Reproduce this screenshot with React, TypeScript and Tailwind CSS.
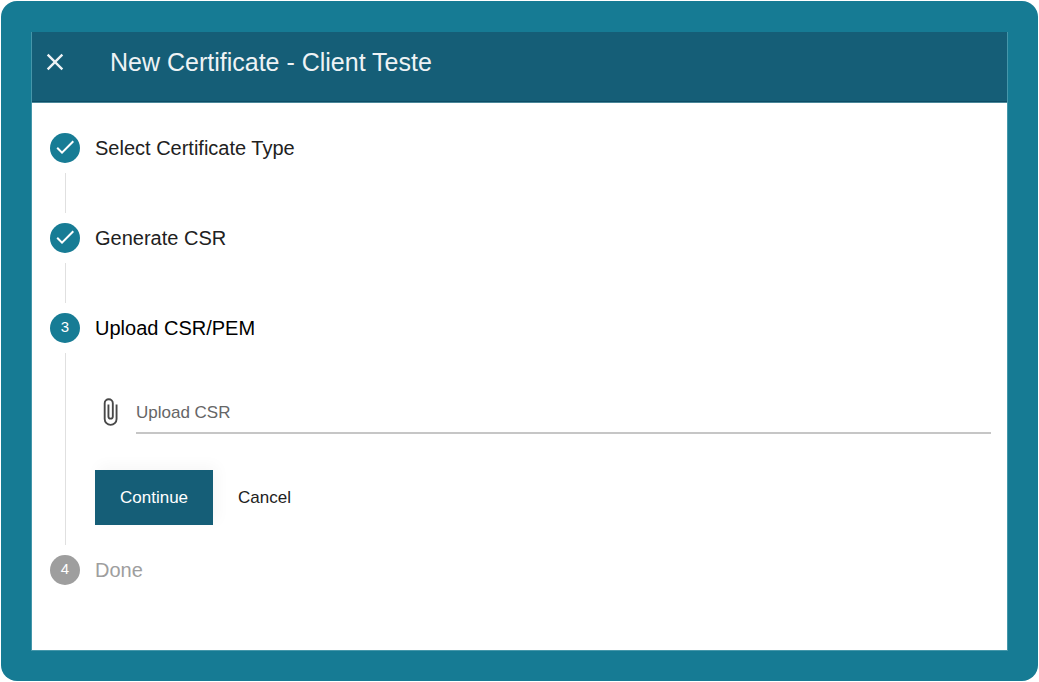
import React from "react";

type StepState = "complete" | "active" | "pending";

interface StepProps {
  number: number;
  title: string;
  state: StepState;
  last?: boolean;
  children?: React.ReactNode;
}

const badgeStyles: Record<StepState, string> = {
  complete: "bg-[#177c95]",
  active: "bg-[#177c95]",
  pending: "bg-[#9e9e9e]",
};

const titleStyles: Record<StepState, string> = {
  complete: "text-[#212121]",
  active: "text-black",
  pending: "text-[#9e9e9e]",
};

function CheckIcon() {
  return (
    <svg viewBox="0 0 24 24" className="size-6" fill="currentColor" aria-hidden="true">
      <path d="M21,7L9,19L3.5,13.5L4.91,12.09L9,16.17L19.59,5.59L21,7Z" />
    </svg>
  );
}

function CloseIcon() {
  return (
    <svg viewBox="0 0 24 24" className="size-7" fill="currentColor" aria-hidden="true">
      <path d="M19,6.41L17.59,5L12,10.59L6.41,5L5,6.41L10.59,12L5,17.59L6.41,19L12,13.41L17.59,19L19,17.59L13.41,12L19,6.41Z" />
    </svg>
  );
}

function PaperclipIcon() {
  return (
    <svg viewBox="0 0 24 24" className="size-[30px]" fill="currentColor" aria-hidden="true">
      <path d="M16.5,6V17.5A4,4 0 0,1 12.5,21.5A4,4 0 0,1 8.5,17.5V5A2.5,2.5 0 0,1 11,2.5A2.5,2.5 0 0,1 13.5,5V15.5A1,1 0 0,1 12.5,16.5A1,1 0 0,1 11.5,15.5V6H10V15.5A2.5,2.5 0 0,0 12.5,18A2.5,2.5 0 0,0 15,15.5V5A4,4 0 0,0 11,1A4,4 0 0,0 7,5V17.5A5.5,5.5 0 0,0 12.5,23A5.5,5.5 0 0,0 18,17.5V6H16.5Z" />
    </svg>
  );
}

function Step({ number, title, state, last = false, children }: StepProps) {
  return (
    <li className="flex gap-[15px]" aria-current={state === "active" ? "step" : undefined}>
      <div className="flex w-[30px] shrink-0 flex-col items-center">
        <span
          className={`flex size-[30px] shrink-0 items-center justify-center rounded-full pb-0.5 text-[15px] leading-5 text-white ${badgeStyles[state]}`}
        >
          {state === "complete" ? <CheckIcon /> : number}
        </span>
        {!last && <span className="my-2.5 min-h-10 w-px grow bg-[#e0e0e0]" />}
      </div>
      <div className="min-w-0 grow">
        <h2 className={`text-xl leading-[30px] ${titleStyles[state]}`}>{title}</h2>
        {children}
      </div>
    </li>
  );
}

export default function App() {
  return (
    <div className="bg-white p-px font-['Liberation_Sans',Arial,sans-serif]">
      <div className="rounded-2xl bg-[#167b94] p-[30px]">
        <main className="mt-px border border-t-0 border-[#4597aa] bg-white">
          <header className="border-b border-[#4a8799] bg-[#155e77] text-[#eef3f5] shadow-[inset_0_-1px_0_#0d4d66]">
            <div className="flex h-[70px] items-center gap-[41px] pb-2.5 pl-[9px]">
              <button type="button" aria-label="Close" className="flex size-7 items-center justify-center">
                <CloseIcon />
              </button>
              <h1 className="text-[25px] leading-8">New Certificate - Client Teste</h1>
            </div>
          </header>

          <ol className="pt-[30px] pr-4 pb-[65px] pl-[18px]">
            <Step number={1} title="Select Certificate Type" state="complete" />
            <Step number={2} title="Generate CSR" state="complete" />
            <Step number={3} title="Upload CSR/PEM" state="active">
              <form className="pt-[47px] pb-[30px]" onSubmit={(e) => e.preventDefault()}>
                <div className="flex items-center gap-[11px]">
                  <label htmlFor="csr" aria-label="Upload CSR" className="text-[#484848]">
                    <PaperclipIcon />
                  </label>
                  <input
                    id="csr"
                    type="text"
                    readOnly
                    placeholder="Upload CSR"
                    className="h-11 min-w-0 grow border-b-2 border-[#c6c6c6] bg-transparent pt-1 text-[17px] leading-6 outline-none placeholder:text-[#666666]"
                  />
                </div>
                <div className="mt-9 flex items-center gap-[25px]">
                  <button
                    type="submit"
                    className="h-[55px] bg-[#155e77] px-[25px] text-[17px] leading-6 text-white shadow-[4px_-4px_14px_rgba(0,0,0,0.04)]"
                  >
                    Continue
                  </button>
                  <button type="button" className="h-[55px] text-[17px] leading-6 text-[#212121]">
                    Cancel
                  </button>
                </div>
              </form>
            </Step>
            <Step number={4} title="Done" state="pending" last />
          </ol>
        </main>
      </div>
    </div>
  );
}
